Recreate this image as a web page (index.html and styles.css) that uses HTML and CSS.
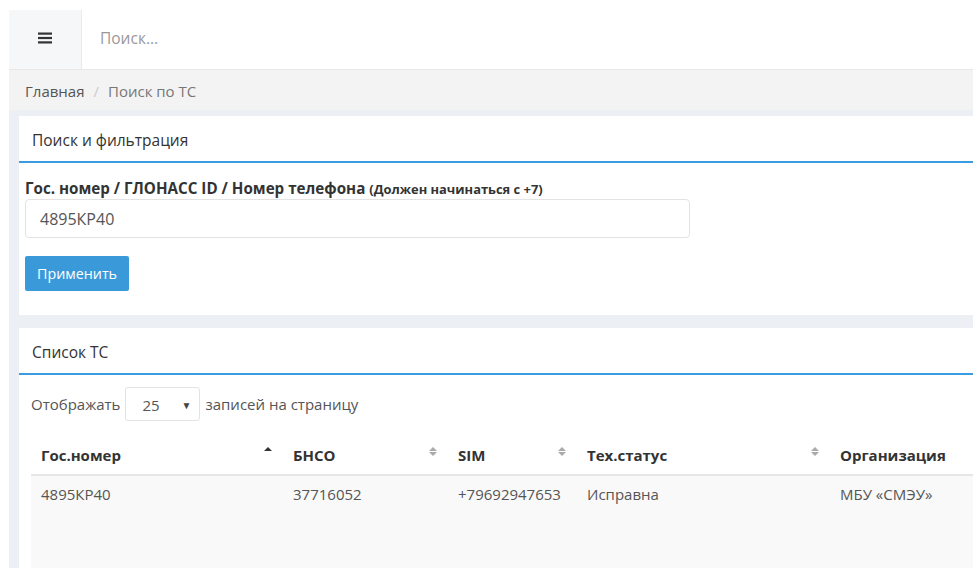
FILE: index.html
```html
<!DOCTYPE html>
<html lang="ru">
<head>
<meta charset="utf-8">
<title>Поиск по ТС</title>
<link rel="stylesheet" href="styles.css">
</head>
<body>
<div class="app">
  <header class="topbar">
    <button class="menu-toggle" type="button" aria-label="Меню">
      <svg width="14" height="12" viewBox="0 0 14 12"><rect x="0" y="0.5" width="14" height="2.2" fill="#333"/><rect x="0" y="4.9" width="14" height="2.2" fill="#333"/><rect x="0" y="9.3" width="14" height="2.2" fill="#333"/></svg>
    </button>
    <input class="global-search" type="text" placeholder="Поиск...">
  </header>

  <nav class="breadcrumb">
    <a class="crumb" href="#">Главная</a>
    <span class="crumb-sep">/</span>
    <span class="crumb-current">Поиск по ТС</span>
  </nav>

  <main class="content">
    <section class="panel">
      <div class="panel-heading">Поиск и фильтрация</div>
      <div class="panel-body">
        <label class="field-label">Гос. номер / ГЛОНАСС ID / Номер телефона <small>(Должен начинаться с +7)</small></label>
        <input class="field-input" type="text" value="4895КР40">
        <button class="btn-primary" type="button">Применить</button>
      </div>
    </section>

    <section class="panel">
      <div class="panel-heading">Список ТС</div>
      <div class="panel-body list-body">
        <div class="page-length">
          <span>Отображать</span>
          <div class="select"><span>25</span><span class="select-arrow">▼</span></div>
          <span>записей на страницу</span>
        </div>
        <table class="grid">
          <thead>
            <tr>
              <th class="c1">Гос.номер<span class="sort asc"></span></th>
              <th class="c2">БНСО<span class="sort both"></span></th>
              <th class="c3">SIM<span class="sort both"></span></th>
              <th class="c4">Тех.статус<span class="sort both"></span></th>
              <th class="c5">Организация</th>
            </tr>
          </thead>
          <tbody>
            <tr>
              <td>4895КР40</td>
              <td>37716052</td>
              <td>+79692947653</td>
              <td>Исправна</td>
              <td>МБУ «СМЭУ»</td>
            </tr>
          </tbody>
        </table>
      </div>
    </section>
  </main>
</div>
</body>
</html>
```

FILE: styles.css
```css
* { box-sizing: border-box; }

html, body {
  margin: 0;
  background: #fff;
  overflow: hidden;
}

body {
  padding: 10px 0 0 9px;
  font-family: "Open Sans", "Noto Sans", sans-serif;
  font-size: 15px;
  color: #333;
}

.app {
  width: 1100px;
}

/* top bar: menu toggle + global search */
.topbar {
  display: flex;
  height: 59px;
  background: #fff;
}

.menu-toggle {
  width: 73px;
  border: 0;
  border-right: 1px solid #e9eaec;
  background: #f6f7f9;
  display: flex;
  align-items: center;
  justify-content: center;
  padding: 0 0 4px;
}

.global-search {
  flex: 1;
  border: 0;
  outline: none;
  padding: 0 18px 4px;
  font: inherit;
  font-size: 15.5px;
  color: #333;
  background: transparent;
}
.global-search::placeholder { color: #999; }

.breadcrumb {
  height: 41px;
  border-top: 1px solid #e8e8e8;
  background: #f3f3f3;
  display: flex;
  align-items: center;
  padding: 1px 16px 0;
  gap: 9px;
  font-size: 15px;
}
.crumb { color: #555; text-decoration: none; }
.crumb-sep { color: #ccc; }
.crumb-current { color: #777; }

.content {
  background: #eceff3;
  padding: 6px 0 0 10px;
  display: flex;
  flex-direction: column;
  gap: 13px;
}

.panel {
  background: #fff;
}

.panel-heading {
  height: 47px;
  display: flex;
  align-items: center;
  padding: 3px 13px 0;
  font-size: 15.5px;
  color: #333;
  border-bottom: 2px solid #3a9be0;
}

.panel-body {
  padding: 16px 6px 24px;
}

.field-label {
  display: block;
  font-weight: 700;
  font-size: 15.2px;
  color: #333;
  line-height: 18px;
}
.field-label small { font-size: 12.9px; }

.field-input {
  display: block;
  margin-top: 1px;
  width: 665px;
  height: 39px;
  border: 1px solid #e3e3e3;
  border-radius: 4px;
  padding: 0 14px;
  font: inherit;
  font-size: 16px;
  color: #555;
}

.btn-primary {
  display: block;
  margin-top: 18px;
  height: 35px;
  padding: 0 12px;
  border: 0;
  border-radius: 2px;
  background: #3a9ad9;
  color: #fff;
  font: inherit;
  font-size: 14.3px;
}

.list-body {
  padding: 12px 0 0 12px;
}

/* rows-per-page control */
.page-length {
  display: flex;
  align-items: center;
  gap: 5px;
  color: #555;
  font-size: 15px;
}

.select {
  width: 75px;
  height: 34px;
  border: 1px solid #e3e3e3;
  border-radius: 3px;
  display: flex;
  align-items: center;
  justify-content: space-between;
  padding: 2px 8px 0 16px;
  color: #555;
  font-size: 15px;
}
.select-arrow { font-size: 10px; color: #444; }

/* vehicle table */
.grid {
  margin-top: 9px;
  border-collapse: collapse;
  width: 1050px;
  table-layout: fixed;
  color: #555;
  font-size: 15px;
}

.grid th {
  position: relative;
  text-align: left;
  font-weight: 700;
  color: #333;
  padding: 14px 10px 9px;
  border-bottom: 2px solid #e6e6e6;
  height: 45px;
}

.c1 { width: 252px; }
.c2 { width: 165px; }
.c3 { width: 129px; }
.c4 { width: 253px; }

.grid td {
  background: #f9f9f9;
  padding: 8px 10px 70px;
  vertical-align: top;
}

.sort {
  position: absolute;
  right: 11px;
  top: 16px;
  width: 8px;
  height: 12px;
}
.sort::before, .sort::after {
  content: "";
  position: absolute;
  left: 0;
  border-left: 4px solid transparent;
  border-right: 4px solid transparent;
}
.sort.asc::before {
  top: 1px;
  border-bottom: 4px solid #333;
}
.sort.both::before {
  top: 1px;
  border-bottom: 4px solid #aaa;
}
.sort.both::after {
  top: 6px;
  border-top: 4px solid #aaa;
}
```
